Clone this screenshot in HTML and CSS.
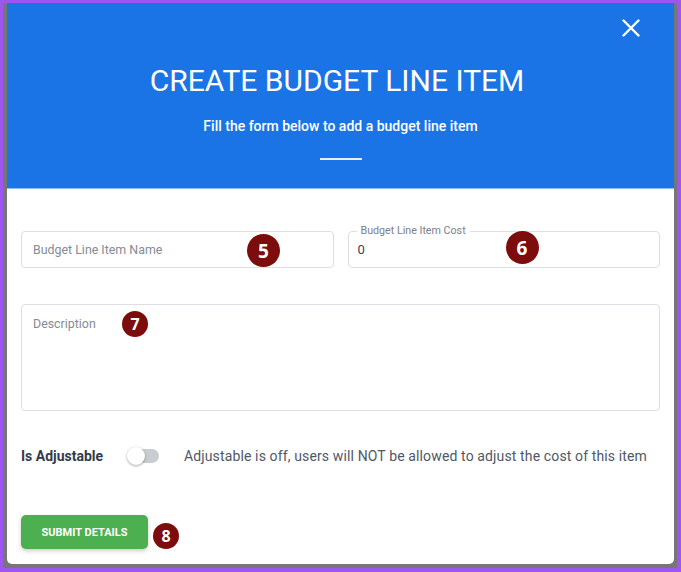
FILE: index.html
```html
<!DOCTYPE html>
<html>
<head>
<meta charset="utf-8">
<link rel="stylesheet" href="styles.css">
</head>
<body>
<div class="frame">
  <div class="modal">
    <header class="modal-head">
      <button class="close" aria-label="Close">
        <svg width="18" height="18" viewBox="0 0 18 18"><path d="M1.5 1.5 L16.5 16.5 M16.5 1.5 L1.5 16.5" stroke="#fff" stroke-width="2.4" stroke-linecap="round"/></svg>
      </button>
      <h1 class="title">CREATE BUDGET LINE ITEM</h1>
      <p class="subtitle">Fill the form below to add a budget line item</p>
      <div class="divider"></div>
    </header>
    <div class="modal-body">
      <div class="row-two">
        <div class="field">
          <span class="placeholder">Budget Line Item Name</span>
          <span class="badge badge-lg b5">5</span>
        </div>
        <div class="field field-cost">
          <span class="legend">Budget Line Item Cost</span>
          <span class="value">0</span>
          <span class="badge badge-lg b6">6</span>
        </div>
      </div>
      <div class="field textarea">
        <span class="placeholder">Description</span>
        <span class="badge badge-sm b7">7</span>
      </div>
      <div class="adjust-row">
        <span class="adjust-label">Is Adjustable</span>
        <span class="toggle"><span class="knob"></span></span>
        <span class="adjust-text">Adjustable is off, users will NOT be allowed to adjust the cost of this item</span>
      </div>
      <div class="submit-row">
        <button class="submit">SUBMIT DETAILS</button>
        <span class="badge badge-sm b8">8</span>
      </div>
    </div>
  </div>
</div>
</body>
</html>
```
FILE: styles.css
```css
* { box-sizing: border-box; }
html, body { margin: 0; padding: 0; }
body {
  width: 681px;
  height: 572px;
  overflow: hidden;
  font-family: Roboto, "Liberation Sans", sans-serif;
}
.frame {
  width: 681px;
  height: 572px;
  border-style: solid;
  border-color: #9e55f2;
  border-width: 3px 4px 4px 3px;
  background: #767676;
  padding: 0 3px 4px 4px;
}
.modal {
  height: 100%;
  background: #fff;
  border-radius: 0 0 5px 5px;
  overflow: hidden;
}
.modal-head {
  position: relative;
  height: 186px;
  background: #1b74e6;
  border-bottom: 1px solid #8fbdf3;
  padding-top: 61px;
  text-align: center;
  color: #fff;
}
.close {
  position: absolute;
  top: 16px;
  right: 34px;
  width: 18px;
  height: 18px;
  padding: 0;
  border: 0;
  background: none;
  display: block;
}
.close svg { display: block; }
.title {
  margin: 0;
  padding-right: 7px;
  font-size: 30px;
  line-height: 34px;
  font-weight: 400;
  letter-spacing: 0;
}
.subtitle {
  margin: 18px 0 0;
  font-size: 14px;
  line-height: 20px;
  font-weight: 500;
}
.divider {
  width: 42px;
  height: 2px;
  margin: 22px auto 0;
  background: #e6f0fd;
}
.modal-body {
  padding: 42px 14px 15px;
}
.row-two {
  display: grid;
  grid-template-columns: 1fr 1fr;
  gap: 14px;
}
.field {
  position: relative;
  height: 37px;
  border: 1px solid #dcdee2;
  border-radius: 4px;
  padding: 0 11px;
  display: flex;
  align-items: center;
}
.field-cost { padding-left: 9px; }
.placeholder {
  font-size: 12.4px;
  color: #858b96;
}
.value {
  font-size: 13px;
  color: #3c4250;
}
.legend {
  position: absolute;
  top: -7px;
  left: 8px;
  padding: 0 4px;
  background: #fff;
  font-size: 10.7px;
  line-height: 12px;
  color: #7b818c;
}
.textarea {
  margin-top: 36px;
  height: 107px;
  align-items: flex-start;
  padding-top: 11px;
}
.badge {
  position: absolute;
  border-radius: 50%;
  background: #7d0c0c;
  color: #fff;
  font-family: "Open Sans", "DejaVu Sans", sans-serif;
  font-weight: 700;
  display: flex;
  align-items: center;
  justify-content: center;
}
.badge-lg { width: 33px; height: 33px; font-size: 19px; }
.badge-sm { width: 26px; height: 26px; font-size: 16px; }
.b5 { left: 225px; top: 2px; }
.b6 { left: 157px; top: -1px; }
.b7 { left: 100px; top: 6px; }
.adjust-row {
  margin-top: 33px;
  height: 24px;
  display: flex;
  align-items: center;
}
.adjust-label {
  font-size: 14px;
  font-weight: 700;
  color: #333b4a;
  width: 106px;
}
.toggle {
  position: relative;
  width: 31px;
  height: 14px;
  border-radius: 7px;
  background: #c9ccd1;
  margin-left: 1px;
}
.knob {
  position: absolute;
  left: -1px;
  top: -2px;
  width: 18px;
  height: 18px;
  border-radius: 50%;
  background: #fff;
  box-shadow: 0 1px 3px rgba(0,0,0,0.35);
}
.adjust-text {
  margin-left: 25px;
  font-size: 14px;
  letter-spacing: 0.13px;
  color: #505766;
}
.submit-row {
  margin-top: 47px;
  display: flex;
  align-items: center;
  gap: 5px;
}
.submit {
  width: 127px;
  height: 34px;
  border: 0;
  border-radius: 5px;
  background: #4caf50;
  color: #fff;
  font-family: Roboto, "Liberation Sans", sans-serif;
  font-size: 11px;
  font-weight: 700;
  box-shadow: 0 2px 4px rgba(0,0,0,0.2);
  padding: 0;
}
.b8 {
  position: static;
  margin-top: 8px;
}
```
